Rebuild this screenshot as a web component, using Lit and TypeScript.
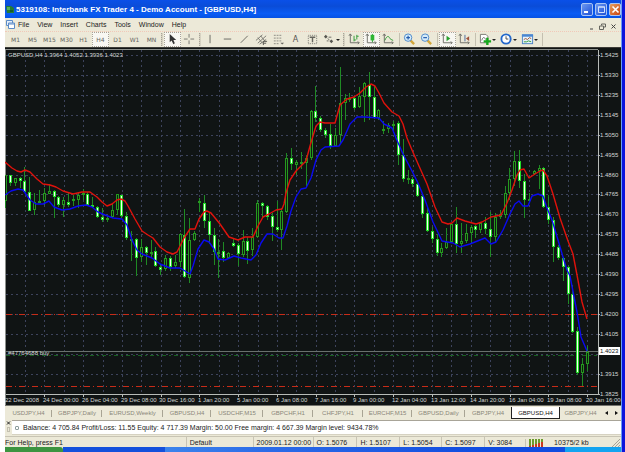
import { LitElement, html, svg, css, nothing } from "lit";
import { customElement, property } from "lit/decorators.js";
import { classMap } from "lit/directives/class-map.js";

/* kind: w = falling (filled), h = rising (hollow); then high, top, bottom, low */
const CANDLES = `h175,175,201,208 w175,175,183,186 h178,178,183,186 w177,178,181,188 w167,181,192,192
w177,192,211,211 h193,202,210,215 h190,201,201,203 h188,193,201,205 h184,191,194,194 w190,191,197,218
w196,197,205,207 h197,200,205,217 w192,202,205,207 h195,199,201,206 h193,195,200,208 h189,193,193,200
w192,194,205,206 w197,205,207,208 w206,207,217,218 w208,217,220,222 h216,218,218,222 h203,210,217,218
h194,194,210,215 w195,195,216,218 w212,216,238,240 h231,239,239,261 w238,239,258,276 h239,247,257,262
w246,247,253,265 h240,252,254,257 w247,251,266,267 w264,267,270,275 h255,258,269,271 w256,258,267,271
h255,262,266,268 h233,234,262,267 w209,235,277,278 h218,240,278,283 h231,233,240,241 h198,201,202,212
w195,203,221,228 w213,221,235,244 w228,235,252,265 h239,252,252,278 w242,251,258,262 h252,253,258,259
w239,243,246,247 w243,245,254,266 h230,241,255,257 w237,241,251,264 h228,237,250,256 h200,203,237,238
w202,203,206,217 w205,206,217,220 w213,216,227,241 w201,227,230,232 h208,211,230,250 h153,158,212,213
w148,158,164,170 h160,162,165,175 h152,162,163,169 h155,158,163,187 h110,111,158,160 w86,111,118,122
w116,118,130,132 w128,130,135,138 w124,134,146,149 h128,135,146,147 h67,103,135,143 h94,98,103,120
h93,98,98,102 w96,98,108,110 h87,96,107,108 h82,83,97,122 w72,85,97,120 w85,97,118,119
h109,110,118,120 h121,129,130,134 h123,125,129,133 h121,124,124,133 w121,123,155,165 w139,155,179,182
h170,178,179,184 w177,179,184,187 w183,184,196,197 w195,196,214,218 w208,213,231,232 w227,231,239,243
w234,239,253,256 h243,248,253,257 h228,242,248,249 h223,224,242,243 w207,224,244,253 h223,241,244,253
h224,233,241,243 h225,227,233,243 w225,226,230,238 h222,223,230,233 w217,223,229,234 w212,229,237,257
h213,217,237,243 h210,214,217,219 h186,193,215,218 h168,179,193,200 h151,161,179,186 w150,161,181,188
w174,181,200,218 h193,199,200,203 h170,171,174,175 h165,168,171,189 w167,168,207,208 w195,207,220,224
w217,220,247,262 w245,247,258,260 w257,258,267,281 w266,267,294,304 w285,294,332,333 w327,331,373,375
h358,364,373,386 h346,352,364,371`
  .split(/\s+/)
  .map((c) => ({ filled: c[0] === "w", v: c.slice(1).split(",").map(Number) }));

const UPPER = "5,162 12,168 17,171 21,172 25,170 30,172 37,179 43,184 50,185 56,187 63,191 73,194 82,192 90,192 97,197 102,202 107,206 112,204 117,200 121,199 125,201 128,206 135,219 142,231 148,235 153,238 160,247 167,252 173,254 177,252 184,238 190,229 195,229 199,219 204,212 207,211 211,213 220,224 229,237 238,240 245,237 253,237 258,226 263,217 269,214 276,210 282,209 284,204 286,193 290,180 296,171 302,165 306,161 310,146 316,126 320,122 325,123 335,123 340,105 347,99 354,97 360,93 366,87 371,84 375,86 379,93 384,103 392,112 399,116 403,124 407,138 412,150 419,166 427,184 435,207 442,222 448,224 452,223 457,218 465,221 476,224 482,222 491,217 501,215 507,203 512,190 517,175 520,170 524,169 529,178 535,174 540,171 543,170 547,176 553,194 560,218 568,241 573,254 577,275 582,302 587,319";
const LOWER = "5,195 11,191 18,189 23,190 30,200 36,204 43,204 49,201 54,207 62,210 70,209 78,206 86,205 92,207 98,212 105,215 113,218 122,219 127,225 132,240 137,250 142,254 152,258 160,264 170,268 180,268 190,274 193,266 198,249 204,240 209,242 214,249 218,259 225,260 234,256 241,258 251,260 256,255 261,243 267,234 273,234 279,238 283,238 287,226 291,211 296,197 301,189 306,188 311,178 316,160 321,150 325,147 339,146 343,140 350,124 357,117 365,117 379,118 384,124 392,128 396,138 403,154 412,171 418,183 425,200 433,222 442,241 453,243 460,247 470,244 485,238 491,244 496,242 503,230 510,214 515,204 519,201 523,206 528,206 532,196 538,194 543,196 547,208 552,220 558,240 563,257 567,270 570,276 577,312 581,337 587,351";

const PRICES = ["1.5425", "1.5330", "1.5235", "1.5145", "1.5050", "1.4955", "1.4860", "1.4765", "1.4670", "1.4575", "1.4485", "1.4390", "1.4295", "1.4200", "1.4105", "", "1.3915", "1.3825"];
const TIMES = ["22 Dec 2008", "24 Dec 00:00", "26 Dec 04:00", "29 Dec 08:00", "30 Dec 16:00", "1 Jan 20:00", "5 Jan 00:00", "6 Jan 08:00", "7 Jan 16:00", "9 Jan 00:00", "12 Jan 04:00", "13 Jan 12:00", "14 Jan 20:00", "16 Jan 04:00", "19 Jan 08:00", "20 Jan 16:00"];

const priceY = (i: number) => 55 + Math.round(i * 19.92);
const gridX = (i: number) => 25 + Math.round(i * 19.38);

@customElement("price-chart")
export class PriceChart extends LitElement {
  static styles = css`
    :host { display: block; background: #101414; }
    .plot { display: block; width: 100%; height: auto; }
    .crisp { shape-rendering: crispEdges; }
    .grid { stroke: #3d435c; stroke-width: 1; stroke-dasharray: 2 3; fill: none; }
    .axis { stroke: #b8bcb8; stroke-width: 1; fill: none; }
    .frame { stroke: #8c908c; stroke-width: 1; fill: none; }
    .wick { stroke: #1f8a24; stroke-width: 1; }
    .rise { fill: #101c12; stroke: #259a1e; stroke-width: 1; }
    .fall { fill: #f4fff0; stroke: #22dc28; stroke-width: 1; }
    .upper { stroke: #e0120c; stroke-width: 1.4; fill: none; stroke-linejoin: round; }
    .lower { stroke: #0a0af0; stroke-width: 1.4; fill: none; stroke-linejoin: round; }
    .stop { stroke: #c82c18; stroke-width: 1; stroke-dasharray: 6 3 1 3; }
    .entry { stroke: #186020; stroke-width: 1; stroke-dasharray: 4 3 2 3; }
    .bid { stroke: #68706c; stroke-width: 1; }
    .label { font: 6px "Liberation Sans", Arial, sans-serif; fill: #d4d6d4; }
    .tag { fill: #ffffff; }
    .tag-label { font: 6px "Liberation Sans", Arial, sans-serif; fill: #101414; }
  `;

  private candle(c: { filled: boolean; v: number[] }, i: number) {
    const x = Math.round(5 + i * 4.85) + 0.5;
    const [hi, top, bot, lo] = c.v;
    return svg`<line class="wick" x1=${x} x2=${x} y1=${hi} y2=${lo}></line>
      <rect class=${c.filled ? "fall" : "rise"} x=${x - 1} y=${top + 0.5} width="2" height=${Math.max(bot - top - 1, 0.5)}></rect>`;
  }

  render() {
    return html`<svg class="plot" viewBox="5 48 616 357" role="img" aria-label="GBPUSD, H4 candlestick chart">
      <g class="crisp">
        ${PRICES.map((_, i) => svg`<path class="grid" d="M6 ${priceY(i) + 0.5}H598"></path>`)}
        ${Array.from({ length: 30 }, (_, i) => svg`<path class="grid" d="M${gridX(i) + 0.5} 50V394"></path>`)}
        <path class="frame" d="M5.5 405V49.5H598"></path>
        <path class="stop" d="M6 314.5H597M6 386.5H597"></path>
        <path class="bid" d="M6 351.5H598"></path>
        <path class="entry" d="M6 355.5H597"></path>
        ${CANDLES.map((c, i) => this.candle(c, i))}
        <path class="axis" d="M6 394.5H598.5V50"></path>
        ${PRICES.map((_, i) => svg`<path class="axis" d="M598 ${priceY(i) + 0.5}H600"></path>`)}
        ${TIMES.map((_, i) => (i ? svg`<path class="axis" d="M${gridX(i * 2 - 1) + 0.5} 394V397"></path>` : nothing))}
      </g>
      <polyline class="upper" points=${UPPER}></polyline>
      <polyline class="lower" points=${LOWER}></polyline>
      <text class="label" x="8" y="57">GBPUSD,H4 1.3964 1.4052 1.3936 1.4023</text>
      <text class="label" x="8" y="355">#47764688 buy</text>
      ${PRICES.map((p, i) => svg`<text class="label" x="600" y=${priceY(i) + 2}>${p}</text>`)}
      <rect class="tag" x="599" y="347" width="21" height="8"></rect>
      <text class="tag-label" x="600" y="353">1.4023</text>
      ${TIMES.map((t, i) => svg`<text class="label" x=${i ? Math.round(43 + (i - 1) * 38.8) : 5} y="402">${t}</text>`)}
    </svg>`;
  }
}

const AXES = svg`<path d="M2.500 1v9.500H12M1 3l1.500-2L4 3M10.500 9L12 10.500L10.500 12" stroke="#6c6c66" fill="none"></path>`;
const ICONS: Record<string, unknown> = {
  cursor: svg`<path d="M4 1v9l2-2 2 4 1.500-1L8 7.500h3z" fill="#333"></path>`,
  cross: svg`<path d="M6.500 1v4M6.500 8v4M1 6.500h4M8 6.500h4" stroke="#77776f"></path>`,
  vline: svg`<path d="M6.500 2v9" stroke="#66665f"></path>`,
  hline: svg`<path d="M3 6.500h8" stroke="#66665f"></path>`,
  trend: svg`<path d="M3 10.500L10.500 3" stroke="#66665f"></path>`,
  channel: svg`<path d="M1 8l7-6M3 11l9-8M5 12l7-5M3 5l5 6M6 3l5 6" stroke="#77776f" fill="none"></path><path d="M9 9h4M9 9v4M9 11h3" stroke="#55554f" fill="none"></path>`,
  fibo: svg`<path d="M2 2.500h9M2 5.500h9M2 8.500h9M2 11.500h5" stroke="#88887f" stroke-dasharray="2 1"></path><path d="M9 10.500h4l-2 2z" fill="#66665f"></path>`,
  label: svg`<rect x="2.500" y="2.500" width="9" height="9" fill="none" stroke="#77776f" stroke-dasharray="1 1"></rect><path d="M4 4.500h6M7 4.500V10" stroke="#66665f" stroke-width="1.500"></path>`,
  arrows: svg`<path d="M1 4l2-2 2 2-2 2zM7 9l2-2 2 2-2 2z" fill="#55554f"></path><path d="M6 4.500h3M4 8.500h2M5 6l2 1.500" stroke="#66665f"></path>`,
  bars: svg`${AXES}<path d="M6.500 3v6M9.500 2v5M6.500 7.500h2M9.500 3.500h2" stroke="#2f9a34"></path>`,
  candles: svg`${AXES}<path d="M8 1v9" stroke="#2f9a34"></path><rect x="6" y="2" width="4" height="6" fill="#2fb634"></rect>`,
  line: svg`${AXES}<path d="M3 8c2-5 4-5 5-3s2 2 4 3" stroke="#2f9a34" fill="none"></path>`,
  zoomin: svg`<path d="M8 8l4 4" stroke="#d2a63a" stroke-width="2.500"></path><circle cx="5.500" cy="5" r="4" fill="#d6ecfa" stroke="#4a86c8"></circle><path d="M3.500 5h4M5.500 3v4" stroke="#245cae" stroke-width="1.300"></path>`,
  zoomout: svg`<path d="M8 8l4 4" stroke="#d2a63a" stroke-width="2.500"></path><circle cx="5.500" cy="5" r="4" fill="#d6ecfa" stroke="#4a86c8"></circle><path d="M3.500 5h4" stroke="#245cae" stroke-width="1.300"></path>`,
  scroll: svg`${AXES}<path d="M6 3v6l4-3z" fill="#28a02c"></path>`,
  shift: svg`${AXES}<path d="M7.500 2v7" stroke="#4a6a9a"></path><path d="M12 3.500v5L8.500 6z" fill="#a0523a"></path>`,
  indicator: svg`<path d="M1.500 1.500h6l2 2v7h-8z" fill="#fff" stroke="#77776f"></path><path d="M3 8c1-4 3-4 4-1" stroke="#666" fill="none"></path><path d="M9 5v8M5 9h8" stroke="#16a81c" stroke-width="2.600"></path>`,
  clock: svg`<circle cx="6.500" cy="6.500" r="5" fill="#fff" stroke="#2468cc" stroke-width="2"></circle><path d="M6.500 3.500v3h2.500" stroke="#444" fill="none"></path>`,
  template: svg`<rect x="1.500" y="2" width="11" height="9.500" fill="#e6f2fc" stroke="#4a82c4"></rect><rect x="1" y="1.500" width="12" height="2.500" fill="#4a86d2"></rect><path d="M3 7l2-1 2 1 2-2 2 1" stroke="#a0522d" fill="none"></path><path d="M3 9.500h3l2-1 3 1" stroke="#2f9a34" fill="none"></path>`,
};

@customElement("tool-bar")
export class ToolBar extends LitElement {
  static styles = css`
    :host { display: flex; align-items: center; height: 16px; box-sizing: border-box; padding: 0 2px; background: #ece9d8; border-top: 1px dotted #f2c8b8; }
    .tool { flex: none; width: 17px; height: 15px; padding: 0; border: 1px solid transparent; background: none; color: #66665f; display: flex; align-items: center; justify-content: center; font: 6px "DejaVu Sans", sans-serif; }
    .menu { width: 21px; }
    .menu::after { content: ""; border: 2px solid transparent; border-top-color: #222; border-bottom: 0; }
    .on { background: #f8f7f2; border: 1px dotted #a8a498; }
    .icon { width: 13px; height: 13px; flex: none; }
    .letter { font-size: 8px; color: #55554f; }
    .sep { flex: none; width: 1px; height: 13px; margin: 0 1px 0 2px; background: #c4c0b0; }
    .grip { flex: none; width: 2px; height: 13px; margin: 0 1px; border-left: 1px dotted #a8a498; background: #d6d2c2; box-sizing: border-box; }
  `;

  private tool(name: string) {
    if (name === "|") return html`<span class="sep"></span>`;
    if (name === "||") return html`<span class="grip"></span>`;
    const id = name.replace(/[*+]/g, "");
    const on = name.includes("*");
    const menu = name.includes("+");
    const icon = ICONS[id];
    return html`<button class=${classMap({ tool: true, on, menu, letter: id === "A" })} aria-pressed=${on ? "true" : "false"} aria-label=${id}>
      ${icon ? html`<svg class="icon" viewBox="0 0 14 14">${icon}</svg>` : id}
    </button>`;
  }

  render() {
    return "M1 M5 M15 M30 H1 H4* D1 W1 MN || cursor* cross || vline hline trend channel fibo A label arrows+ || bars candles* line | zoomin zoomout | scroll* shift | indicator+ clock+ template+ |"
      .split(" ")
      .map((n) => this.tool(n));
  }
}

const TABS = ["USDJPY,H4", "GBPJPY,Daily", "EURUSD,Weekly", "GBPUSD,H4", "USDCHF,M15", "GBPCHF,H1", "CHFJPY,H1", "EURCHF,M15", "GBPUSD,Daily", "GBPJPY,H4", "GBPUSD,H4", "GBPJPY,H4"];

@customElement("chart-tabs")
export class ChartTabs extends LitElement {
  @property({ type: Number }) active = 10;
  static styles = css`
    :host { display: grid; grid-template-columns: 47fr 50fr 61fr 48fr 52fr 50fr 50fr 49fr 53fr 46fr 49fr 41fr 10fr 10fr; align-items: start; height: 15px; box-sizing: border-box; padding-top: 1px; background: #ece9d8; border-top: 1px solid #74746e; }
    .tab { min-width: 0; height: 12px; padding: 0; border: 0; color: #8a8678; font: 6px "Liberation Sans", Arial, sans-serif; white-space: nowrap; background: linear-gradient(#a8a494, #a8a494) right center / 1px 7px no-repeat; }
    .last { background: none; }
    .on { background: #fff; color: #111; border: 1px solid #222; border-top: 0; }
    .step { padding: 0; height: 12px; border: 0; background: none; display: flex; align-items: center; justify-content: center; }
    .left::after, .right::after { content: ""; border: 2px solid transparent; }
    .left::after { border-right: 3px solid #111; border-left: 0; }
    .right::after { border-left: 3px solid #111; border-right: 0; }
  `;
  render() {
    return html`${TABS.map((t, i) => html`<button class=${classMap({ tab: true, on: i === this.active, last: i > 8 && i !== this.active })}>${t}</button>`)}
      <button class="step left" aria-label="Previous charts"></button>
      <button class="step right" aria-label="Next charts"></button>`;
  }
}

@customElement("app-root")
export class AppRoot extends LitElement {
  static styles = css`
    :host { display: block; padding-left: 5px; background: #fff; font: 7px "Liberation Sans", Arial, sans-serif; color: #222; overflow: hidden; }
    .frame { border-right: 3px solid #0c14dc; }
    .inner { border-right: 1px solid #6c9cf0; background: #ece9d8; overflow: hidden; }
    .title { display: flex; align-items: center; gap: 2px; height: 18px; padding: 1px 0 0 1px; box-sizing: border-box; background: linear-gradient(#0a50e8, #0a4cd8 35%, #0a5cf4 75%, #0652e4); color: #fff; }
    .app-icon { width: 8px; height: 9px; flex: none; }
    .name { flex: 1; margin: 0; font: bold 8px "Liberation Sans", Arial, sans-serif; white-space: nowrap; }
    .win { width: 12px; height: 13px; padding: 0; border: 1px solid #a8c4f4; border-radius: 2px; background: linear-gradient(135deg, #6c98f0, #1c50d8); display: flex; align-items: center; justify-content: center; }
    .close { background: linear-gradient(135deg, #e8a060, #c84410); }
    .glyph { width: 9px; height: 9px; flex: none; }
    .menubar { display: flex; align-items: center; height: 13px; padding: 0 2px 0 1px; }
    .doc { width: 9px; height: 9px; margin-right: 3px; }
    .menu { padding: 0; margin-right: 8px; border: 0; background: none; font: inherit; color: #222; }
    .child { width: 11px; height: 11px; padding: 0; border: 0; background: none; }
    .push { margin-left: auto; }
    .edge { height: 1px; background: #3c3c38; }
    .terminal { display: flex; height: 16px; }
    .side { width: 7px; display: flex; flex-direction: column; align-items: center; gap: 1px; }
    .x { padding: 0; border: 0; background: none; width: 5px; height: 6px; display: flex; }
    .handle { width: 3px; height: 5px; border: 1px solid #c4c0b0; box-sizing: border-box; }
    .balance { flex: 1; display: flex; align-items: center; gap: 4px; padding-left: 3px; background: #fff; border-top: 1px solid #a8a498; border-bottom: 1px solid #d6d2c2; box-sizing: border-box; height: 15px; white-space: nowrap; }
    .dot { width: 2px; height: 2px; border: 1px solid #8c9c9c; border-radius: 1px; }
    .status { display: grid; grid-template-columns: 181fr 67fr 60fr 44fr 43fr 42fr 43fr 41fr 26fr 60fr 10fr; align-items: center; height: 11px; line-height: 11px; white-space: nowrap; border-top: 1px solid #c8c4b4; box-sizing: border-box; overflow: hidden; }
    .cell { padding-left: 3px; border-left: 1px solid #c8c4b4; }
    .plain { border-left: 0; }
    .signal { width: 14px; height: 8px; display: block; }
    .grip { width: 9px; height: 9px; }
    .task { display: grid; grid-template-columns: 58fr 103fr 403fr 56fr; height: 5px; }
    .start { background: #3c9440; border-top-right-radius: 3px; }
    .quick { background: #1450dc; }
    .band { background: linear-gradient(90deg, #3c84ec, #2c6ce8 25%, #104ce0 80%); }
    .tray { background: #14a4f0; }
  `;

  render() {
    return html`<div class="frame"><div class="inner">
      <header class="title">
        <svg class="app-icon" viewBox="0 0 8 9"><path d="M0 1h5l3 2v5H1z" fill="#247c34"></path><path d="M1 2h3v3H1z" fill="#58b058"></path><path d="M4 5h3v2H4z" fill="#145c28"></path></svg>
        <h1 class="name">5319108: Interbank FX Trader 4 - Demo Account - [GBPUSD,H4]</h1>
        <button class="win" aria-label="Minimize"><svg class="glyph" viewBox="0 0 9 9"><path d="M1 7h4" stroke="#fff" stroke-width="2"></path></svg></button>
        <button class="win" aria-label="Maximize"><svg class="glyph" viewBox="0 0 9 9"><path d="M1.500 2h6v5.500h-6zM1 2h7" stroke="#d4e2fc" fill="none"></path></svg></button>
        <button class="win close" aria-label="Close"><svg class="glyph" viewBox="0 0 9 9"><path d="M1.500 1.500l6 6M7.500 1.500l-6 6" stroke="#fff" stroke-width="1.600"></path></svg></button>
      </header>
      <nav class="menubar">
        <svg class="doc" viewBox="0 0 9 9"><path d="M.500 .500h6v5h-6z" fill="#e6f0fc" stroke="#5c8cc8"></path><path d="M2.500 3h6v5.500h-6z" fill="#fff" stroke="#5c8cc8"></path><path d="M3 4h5" stroke="#5c8cc8"></path></svg>
        ${["File", "View", "Insert", "Charts", "Tools", "Window", "Help"].map((m) => html`<button class="menu">${m}</button>`)}
        <button class="child push" aria-label="Minimize chart"><svg class="glyph" viewBox="0 0 9 9"><path d="M3 7h3" stroke="#444"></path></svg></button>
        <button class="child" aria-label="Restore chart"><svg class="glyph" viewBox="0 0 9 9"><path d="M3.500 3.500V2h4v3H6M1.500 4h4v3.500h-4z" stroke="#66665f" fill="none"></path></svg></button>
        <button class="child" aria-label="Close chart"><svg class="glyph" viewBox="0 0 9 9"><path d="M2.500 2.500l4 4M6.500 2.500l-4 4" stroke="#444"></path></svg></button>
      </nav>
      <tool-bar></tool-bar>
      <div class="edge"></div>
      <price-chart></price-chart>
      <chart-tabs></chart-tabs>
      <section class="terminal">
        <div class="side"><button class="x" aria-label="Close terminal"><svg viewBox="0 0 5 6"><path d="M1 1.500l3 3M4 1.500l-3 3" stroke="#222"></path></svg></button><span class="handle"></span></div>
        <div class="balance"><span class="dot"></span><span>Balance: 4 705.84 Profit/Loss: 11.55 Equity: 4 717.39 Margin: 50.00 Free margin: 4 667.39 Margin level: 9434.78%</span></div>
      </section>
      <footer class="status">
        <span>For Help, press F1</span>
        <span class="cell">Default</span>
        <span class="cell">2009.01.12 00:00</span>
        <span class="cell">O: 1.5076</span>
        <span class="cell">H: 1.5107</span>
        <span class="cell">L: 1.5054</span>
        <span class="cell">C: 1.5097</span>
        <span class="cell">V: 3084</span>
        <span class="cell"><svg class="signal" viewBox="0 0 14 8"><path d="M1 0v8M4 0v7M7 0v6M10 0v4M13 0v3" stroke="#6c9c2c" stroke-width="2"></path><path d="M1 7v1M4 6v2M7 5v3M10 4v4M13 3v5" stroke="#c83820" stroke-width="2"></path></svg></span>
        <span class="cell plain">10375/2 kb</span>
        <svg class="grip" viewBox="0 0 9 9"><path d="M1 9l8-8M4 9l5-5M7 9l2-2" stroke="#a8a498"></path></svg>
      </footer>
      <div class="task"><span class="start"></span><span class="quick"></span><span class="band"></span><span class="tray"></span></div>
    </div></div>`;
  }
}
